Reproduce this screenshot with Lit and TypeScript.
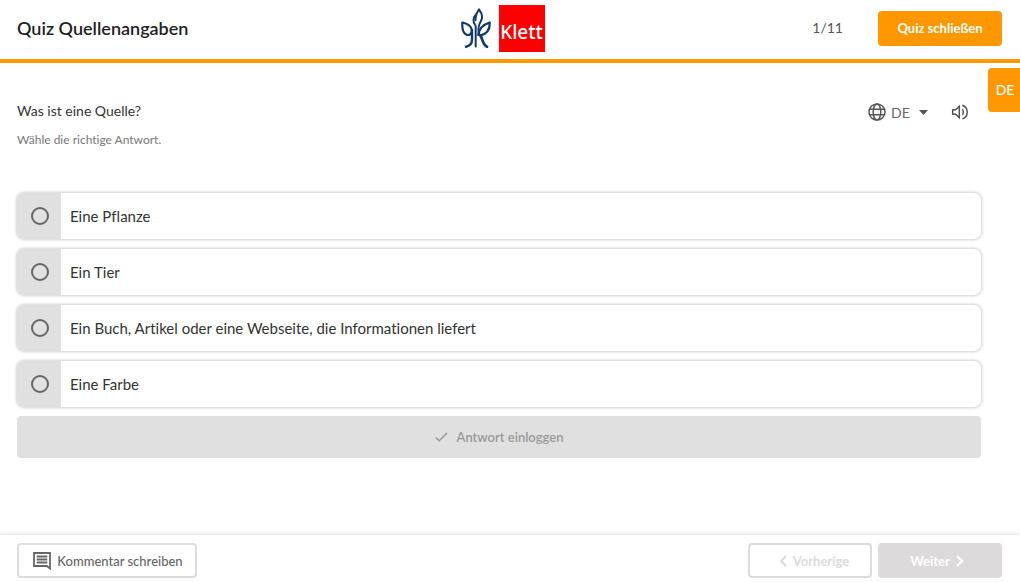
import { LitElement, html, css, svg } from "lit";
import { customElement, state } from "lit/decorators.js";

const ANSWERS = [
  "Eine Pflanze",
  "Ein Tier",
  "Ein Buch, Artikel oder eine Webseite, die Informationen liefert",
  "Eine Farbe",
];

const fleur = svg`
  <g fill="none" stroke="#12396b" stroke-linecap="round" stroke-linejoin="round">
    <path d="M1.300 14.500C1 20 2 25 5.500 26.800 8.500 27.800 11 25.500 10.800 22 10 17.500 6 15.500 1.300 14.500z" stroke-width="2.200"/>
    <path d="M11 22v9.500c0 5-2.500 6.500-6 7.200" stroke-width="2.400"/>
    <path d="M14.700 38.500V18c-2.600-3.500-3.300-7.500.3-11.500" stroke-width="2"/>
    <path d="M14.700 12C14 7.500 16 4 18 1.300c2.300 3 4 7 2.400 10.700-1.200 2.800-2.900 4.500-2.900 8.500v6.500" stroke-width="2"/>
    <path d="M17.500 27C18 20.500 23 16.300 28.700 14.500 29 20.500 26.500 25.800 19.500 27.300" stroke-width="2.200"/>
    <path d="M19.500 27.500c2.300 4 2.300 9.500 6.500 11.200" stroke-width="2.800"/>
  </g>`;

@customElement("app-root")
export class AppRoot extends LitElement {
  @state() private selected = -1;

  static styles = css`
    :host {
      display: flex;
      flex-direction: column;
      min-height: 100vh;
      box-sizing: border-box;
      background: #fff;
      color: #333;
      font-family: Lato, "Open Sans", sans-serif;
      font-size: 14px;
      line-height: 20px;
      font-variant-ligatures: none;
    }
    * { box-sizing: border-box; }
    svg { display: block; flex: none; }
    h1, h2, p { margin: 0; font-weight: 400; }
    button, select, input { font: inherit; margin: 0; }
    button { cursor: pointer; }
    button:disabled { cursor: default; }

    .header {
      display: grid;
      grid-template-columns: 1fr auto 1fr;
      align-items: center;
      height: 63px;
      padding: 0 18px 3px 17px;
      border-bottom: 4px solid #ff9800;
    }
    .title { font-size: 18px; line-height: 24px; font-weight: 600; color: #222; }
    .logo { display: flex; align-items: center; gap: 8px; margin-right: 14px; }
    .logo-box {
      display: flex;
      align-items: flex-end;
      justify-content: center;
      width: 46px;
      height: 47px;
      padding-bottom: 7px;
      background: #f00;
      color: #fff;
      font-family: "Noto Sans", "Open Sans", sans-serif;
      font-size: 19px;
      line-height: 26px;
      font-weight: 500;
    }
    .header-end { display: flex; align-items: center; justify-content: flex-end; gap: 35px; }
    .count { color: #555; }
    .btn {
      display: flex;
      align-items: center;
      justify-content: center;
      height: 35px;
      padding: 0 16px;
      border: 0;
      border-radius: 4px;
      font-size: 13px;
      font-weight: 700;
    }
    .close { width: 124px; padding: 0; background: #ff9800; color: #fff; }

    .main { position: relative; flex: 1; padding: 36px 39px 24px 17px; }
    .tab {
      position: absolute;
      top: 5px;
      right: 0;
      width: 32px;
      height: 44px;
      padding: 0 0 0 2px;
      border: 0;
      border-radius: 4px 0 0 4px;
      background: #ff9800;
      color: #fff;
      font-weight: 500;
    }
    .question-row { display: flex; justify-content: space-between; align-items: flex-start; }
    .question { font-size: 14px; line-height: 24px; color: #333; }
    .hint { margin-top: 7px; font-size: 12px; line-height: 20px; color: #777; }
    .tools { display: flex; align-items: center; height: 26px; padding-right: 12px; }
    .language { display: flex; align-items: center; gap: 5px; color: #555; }
    .language-select {
      width: 23px;
      padding: 2px 0 0;
      border: 0;
      appearance: none;
      background: transparent;
      color: #666;
    }
    .speaker { margin-left: 18px; padding: 0; border: 0; background: none; color: #555; }
    .caret { margin: 0 5px 0 0; }

    .answers { display: grid; gap: 10px; margin: 43px 0 0; padding: 0; border: 0; min-width: 0; }
    .answer {
      display: flex;
      align-items: stretch;
      height: 46px;
      overflow: hidden;
      border-radius: 7px;
      box-shadow: 0 0 3px 1px rgba(0, 0, 0, 0.18);
      cursor: pointer;
    }
    .answer-mark {
      display: grid;
      place-items: center;
      width: 44px;
      padding-left: 2px;
      background: #e0e0e0;
    }
    .radio {
      width: 18px;
      height: 18px;
      appearance: none;
      border: 2px solid #666;
      border-radius: 50%;
    }
    .radio:checked { background: #666; box-shadow: inset 0 0 0 3px #e0e0e0; }
    .answer-text { align-self: center; padding-left: 9px; font-size: 15px; color: #333; }
    .submit {
      width: 100%;
      height: 42px;
      margin-top: 9px;
      gap: 9px;
      background: #e0e0e0;
      color: #999;
      font-weight: 600;
    }

    .footer {
      display: flex;
      align-items: flex-start;
      gap: 6px;
      height: 47px;
      padding: 8px 18px 0 17px;
      box-shadow: 0 0 5px rgba(0, 0, 0, 0.2);
    }
    .comment {
      gap: 6px;
      width: 180px;
      padding: 0 0 0 2px;
      margin-right: auto;
      border: 2px solid #ddd;
      background: #fff;
      color: #666;
      font-weight: 500;
    }
    .nav { width: 124px; padding: 0; gap: 6px; }
    .previous { padding-left: 8px; border: 2px solid #dcdadb; background: #fff; color: #dcdadb; }
    .next { padding-right: 6px; background: #dcdadb; color: #fff; }
  `;

  render() {
    return html`
      <header class="header">
        <h1 class="title">Quiz Quellenangaben</h1>
        <div class="logo">
          <svg width="30" height="40" viewBox="0 0 30 40" aria-hidden="true">${fleur}</svg>
          <span class="logo-box">Klett</span>
        </div>
        <div class="header-end">
          <span class="count">1/11</span>
          <button class="btn close" type="button">Quiz schließen</button>
        </div>
      </header>

      <main class="main">
        <button class="tab" type="button">DE</button>
        <div class="question-row">
          <div>
            <h2 class="question" id="question">Was ist eine Quelle?</h2>
            <p class="hint">Wähle die richtige Antwort.</p>
          </div>
          <div class="tools">
            <div class="language">
              <svg width="18" height="18" viewBox="0 0 18 18" fill="none" stroke="currentColor" stroke-width="1.500" aria-hidden="true">
                <circle cx="9" cy="9" r="8"/><ellipse cx="9" cy="9" rx="3.800" ry="8"/>
                <path d="M1.500 6.200h15M1.500 11.800h15"/>
              </svg>
              <select class="language-select" aria-label="Sprache"><option>DE</option></select>
              <svg class="caret" width="9" height="5" viewBox="0 0 9 5" aria-hidden="true"><path d="M0 0h9L4.500 5z" fill="currentColor"/></svg>
            </div>
            <button class="speaker" type="button" aria-label="Vorlesen">
              <svg width="18" height="18" viewBox="0 0 18 18" fill="none" stroke="currentColor" stroke-width="1.500" aria-hidden="true">
                <path d="M1.700 6.700h3L8.300 3.300v11.400L4.700 11.300h-3z"/>
                <path d="M11.300 6.200c1.500 1.300 1.500 4.300 0 5.600M11.300 2.200c6.600 2 6.600 11.600 0 13.600"/>
              </svg>
            </button>
          </div>
        </div>

        <fieldset class="answers" aria-labelledby="question">
          ${ANSWERS.map(
            (text, i) => html`
              <label class="answer">
                <span class="answer-mark">
                  <input class="radio" type="radio" name="answer" .checked=${this.selected === i}
                    @change=${() => (this.selected = i)} />
                </span>
                <span class="answer-text">${text}</span>
              </label>`
          )}
        </fieldset>
        <button class="btn submit" type="button" ?disabled=${this.selected < 0}>
          <svg width="13" height="10" viewBox="0 0 13 10" fill="none" stroke="currentColor" stroke-width="1.500" aria-hidden="true"><path d="M1 5.500l3.200 3.200L12 1"/></svg>
          Antwort einloggen
        </button>
      </main>

      <footer class="footer">
        <button class="btn comment" type="button">
          <svg width="18" height="18" viewBox="0 0 18 18" fill="none" stroke="currentColor" stroke-width="1.800" aria-hidden="true">
            <path d="M1 1h16v15.500L13.800 14H1z"/><path d="M3.700 4.500h10.600M3.700 7.500h10.600M3.700 10.500h10.600"/>
          </svg>
          Kommentar schreiben
        </button>
        <button class="btn nav previous" type="button" disabled>
          <svg width="8" height="12" viewBox="0 0 8 12" fill="none" stroke="currentColor" stroke-width="2" aria-hidden="true"><path d="M7 1L2 6l5 5"/></svg>
          Vorherige
        </button>
        <button class="btn nav next" type="button" disabled>
          Weiter
          <svg width="8" height="12" viewBox="0 0 8 12" fill="none" stroke="currentColor" stroke-width="2.400" aria-hidden="true"><path d="M1 1l5 5-5 5"/></svg>
        </button>
      </footer>
    `;
  }
}
